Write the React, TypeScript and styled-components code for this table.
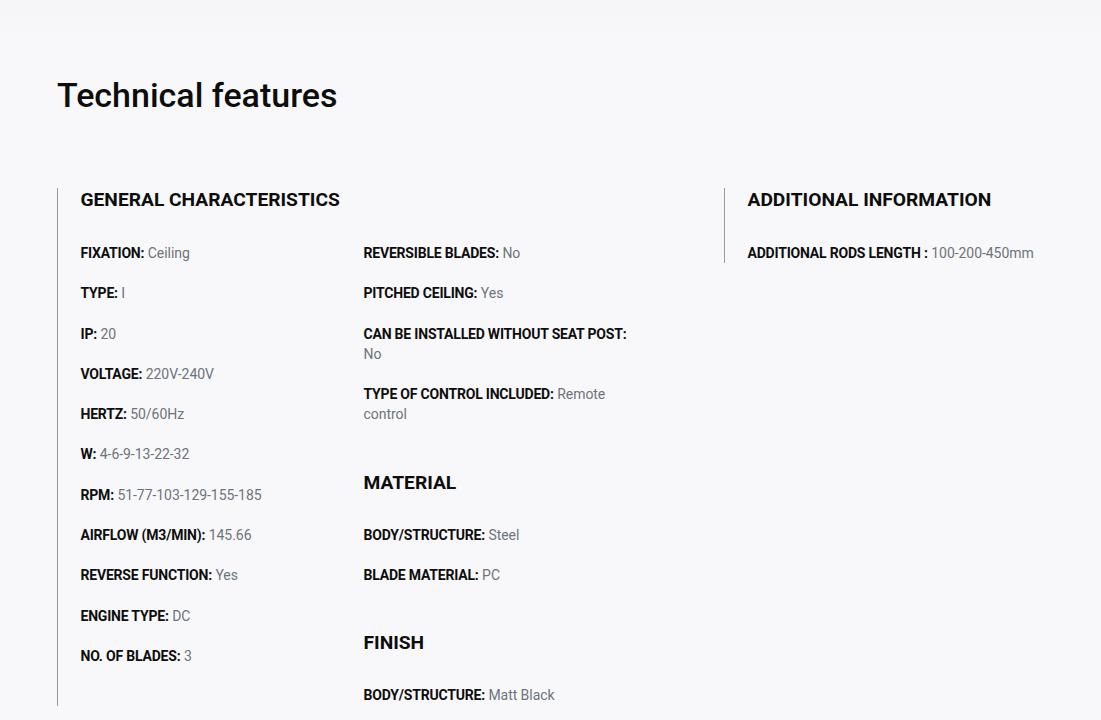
import React from "react";
import styled, { createGlobalStyle } from "styled-components";

const GlobalStyle = createGlobalStyle`
    html, body {
        margin: 0;
        padding: 0;
        background: #f8f8fa;
    }
    body {
        font-family: Roboto, "Liberation Sans", Arial, sans-serif;
        color: #111111;
    }
`;

const Page = styled.div`
    min-height: 720px;
    background: linear-gradient(to bottom, #f6f6f8 0px, #f7f7f9 30px, #f8f8fa 32px);
    padding: 74px 57px 0 57px;
    box-sizing: border-box;
`;

const Title = styled.h1`
    margin: 0 0 72px 0;
    font-size: 34px;
    line-height: 42px;
    font-weight: 500;
    color: #0d0d0d;
`;

const Sections = styled.div`
    display: flex;
    flex-direction: row;
    align-items: flex-start;
    gap: 24px;
`;

const Section = styled.section<{ width: number }>`
    width: ${(props) => props.width}px;
    flex-shrink: 0;
    border-left: 1px solid #9a9a9a;
    padding-left: 22.5px;
    box-sizing: border-box;
`;

const Columns = styled.div`
    display: grid;
    grid-template-columns: 263px 263px;
    column-gap: 20px;
`;

const Heading = styled.h2<{ spaced?: boolean }>`
    margin: ${(props) => props.spaced ? "26px" : "0"} 0 ${(props) => props.spaced ? "30px" : "31px"} 0;
    font-size: 19.2px;
    line-height: 24px;
    font-weight: 700;
    color: #0d0d0d;
`;

const Item = styled.div`
    font-size: 14px;
    line-height: 20.3px;
    margin-bottom: 20px;
    &:last-child {
        margin-bottom: 0;
    }
`;

const Label = styled.span`
    font-weight: 700;
    color: #0d0d0d;
    letter-spacing: -0.2px;
`;

const Value = styled.span`
    color: #6d737a;
    letter-spacing: -0.05px;
`;

type Spec = [string, string];

const Row: React.FC<{ spec: Spec }> = ({ spec }) => (
    <Item>
        <Label>{spec[0]}</Label> <Value>{spec[1]}</Value>
    </Item>
);

const general: Spec[] = [
    ["FIXATION:", "Ceiling"],
    ["TYPE:", "I"],
    ["IP:", "20"],
    ["VOLTAGE:", "220V-240V"],
    ["HERTZ:", "50/60Hz"],
    ["W:", "4-6-9-13-22-32"],
    ["RPM:", "51-77-103-129-155-185"],
    ["AIRFLOW (M3/MIN):", "145.66"],
    ["REVERSE FUNCTION:", "Yes"],
    ["ENGINE TYPE:", "DC"],
    ["NO. OF BLADES:", "3"],
];

const general2: Spec[] = [
    ["REVERSIBLE BLADES:", "No"],
    ["PITCHED CEILING:", "Yes"],
    ["CAN BE INSTALLED WITHOUT SEAT POST:", "No"],
    ["TYPE OF CONTROL INCLUDED:", "Remote control"],
];

const material: Spec[] = [
    ["BODY/STRUCTURE:", "Steel"],
    ["BLADE MATERIAL:", "PC"],
];

const finish: Spec[] = [["BODY/STRUCTURE:", "Matt Black"]];

const Column = styled.div`
    display: flex;
    flex-direction: column;
`;

const Group = styled.div`
    margin-bottom: 20px;
    &:last-child {
        margin-bottom: 0;
    }
`;

export default function App() {
    return (
        <>
            <GlobalStyle />
            <Page>
                <Title>Technical features</Title>
                <Sections>
                    <Section width={643}>
                        <Heading>GENERAL CHARACTERISTICS</Heading>
                        <Columns>
                            <Column>
                                {general.map((s) => <Row key={s[0]} spec={s} />)}
                            </Column>
                            <Column>
                                <Group>
                                    {general2.map((s) => <Row key={s[0]} spec={s} />)}
                                </Group>
                                <Heading spaced>MATERIAL</Heading>
                                <Group>
                                    {material.map((s) => <Row key={s[0]} spec={s} />)}
                                </Group>
                                <Heading spaced>FINISH</Heading>
                                <Group>
                                    {finish.map((s) => <Row key={s[0]} spec={s} />)}
                                </Group>
                            </Column>
                        </Columns>
                    </Section>
                    <Section width={320}>
                        <Heading>ADDITIONAL INFORMATION</Heading>
                        <Row spec={["ADDITIONAL RODS LENGTH :", "100-200-450mm"]} />
                    </Section>
                </Sections>
            </Page>
        </>
    );
}
